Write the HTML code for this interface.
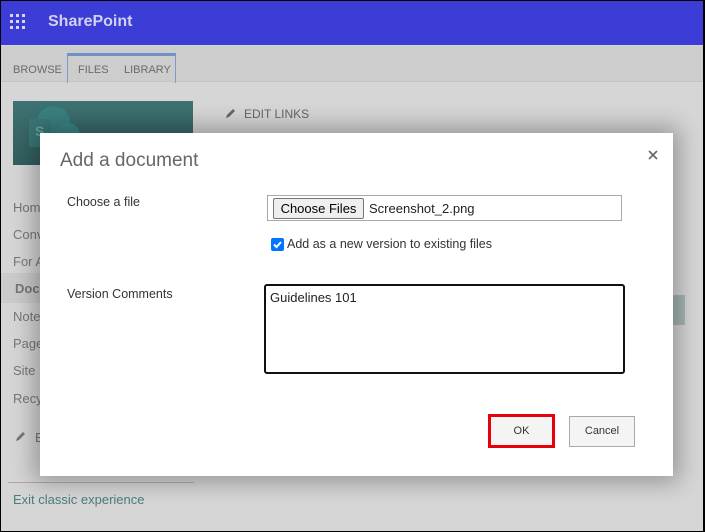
<!DOCTYPE html>
<html><head><style>
*{box-sizing:border-box;margin:0;padding:0}
body{width:705px;height:532px;overflow:hidden;background:#000;font-family:"Liberation Sans",sans-serif;position:relative}
.page{position:absolute;left:1px;top:1px;width:702px;height:530px;background:#d6d6d6;overflow:hidden}
.hdr{position:absolute;left:0;top:0;width:702px;height:44px;background:#3c3cd6}
.hdr .t{position:absolute;left:47px;top:12px;color:#d0d0f2;font-weight:bold;font-size:16px}
.dots{position:absolute;left:9px;top:13px}
.dots i{position:absolute;width:3px;height:3px;background:#d8d8f4}
.rib{position:absolute;left:0;top:44px;width:702px;height:37px;background:#cdcdcd;border-top:1px solid #d4d4d4;border-bottom:1px solid #c4c4c4}
.rib span{position:absolute;top:18px;font-size:11px;color:#6a6a6a}
.tab{position:absolute;left:66px;top:7px;width:109px;height:30px;border:1px solid #7d9ccb;border-top:3px solid #6e92c8;border-bottom:none}
.nav{position:absolute;left:12px;font-size:13px;color:#777}
.t2{position:absolute;font-size:12px;color:#666}
.dlg{position:absolute;left:39px;top:132px;width:633px;height:343px;background:#fff;box-shadow:0 0 22px 6px rgba(0,0,0,.3)}
.lbl{position:absolute;font-size:12.5px;color:#333}
</style></head><body>
<div class="page">
<div class="hdr">
<div class="dots">
<i style="left:0;top:0"></i><i style="left:6px;top:0"></i><i style="left:12px;top:0"></i>
<i style="left:0;top:6px"></i><i style="left:6px;top:6px"></i><i style="left:12px;top:6px"></i>
<i style="left:0;top:12px"></i><i style="left:6px;top:12px"></i><i style="left:12px;top:12px"></i>
</div>
<div class="t">SharePoint</div>
</div>
<div class="rib">
<div class="tab"></div>
<span style="left:12px">BROWSE</span><span style="left:77px">FILES</span><span style="left:123px">LIBRARY</span>
</div>
<div style="position:absolute;left:12px;top:100px;width:180px;height:64px;background:linear-gradient(#3e7373,#335e5e)">
<div style="position:absolute;left:24px;top:5px;width:33px;height:33px;border-radius:50%;background:#3a8080"></div>
<div style="position:absolute;left:43px;top:22px;width:24px;height:24px;border-radius:50%;background:#3a8585"></div>
<div style="position:absolute;left:16px;top:18px;width:22px;height:28px;background:#3b7878;color:#6ea5a5;font-weight:bold;font-size:14px;padding:4px 6px">S</div>
</div>
<svg style="position:absolute;left:224px;top:106px" width="12" height="12" viewBox="0 0 12 12"><path d="M1 11l1-3 6-6 2 2-6 6z" fill="#666"/></svg>
<div class="t2" style="left:243px;top:106px">EDIT LINKS</div>
<div style="position:absolute;left:0;top:272px;width:192px;height:30px;background:#cbcbcb"></div>
<div class="nav" style="top:199px">Home</div>
<div class="nav" style="top:226px">Conv</div>
<div class="nav" style="top:253px">For A</div>
<div class="nav" style="top:280px;left:14px;font-weight:bold;color:#777">Docu</div>
<div class="nav" style="top:308px">Note</div>
<div class="nav" style="top:335px">Page</div>
<div class="nav" style="top:362px">Site</div>
<div class="nav" style="top:390px">Recy</div>
<svg style="position:absolute;left:14px;top:429px" width="12" height="12" viewBox="0 0 12 12"><path d="M1 11l1-3 6-6 2 2-6 6z" fill="#777"/></svg>
<div class="nav" style="top:429px;left:34px">E</div>
<div style="position:absolute;left:7px;top:481px;width:186px;height:1px;background:#aaa"></div>
<div class="nav" style="top:491px;color:#4a7d7d">Exit classic experience</div>
<div style="position:absolute;left:671px;top:294px;width:13px;height:30px;background:#a6b5b5"></div>
<div class="dlg">
<div style="position:absolute;left:20px;top:17px;font-size:19px;color:#666">Add a document</div>
<svg style="position:absolute;left:608px;top:17px" width="10" height="10" viewBox="0 0 10 10"><path d="M1 1l8 8M9 1l-8 8" stroke="#666" stroke-width="1.6"/></svg>
<div class="lbl" style="left:27px;top:62px">Choose a file</div>
<div class="lbl" style="left:27px;top:154px">Version Comments</div>
<div style="position:absolute;left:227px;top:62px;width:355px;height:26px;border:1px solid #aaa"></div>
<div style="position:absolute;left:233px;top:65px;width:91px;height:21px;background:#efefef;border:1px solid #767676;border-radius:2px;font-size:13px;color:#000;text-align:center;line-height:19px">Choose Files</div>
<div style="position:absolute;left:329px;top:68px;font-size:13px;color:#222">Screenshot_2.png</div>
<div style="position:absolute;left:231px;top:105px;width:13px;height:13px;background:#0075ff;border-radius:2px">
<svg width="13" height="13" viewBox="0 0 13 13"><path d="M3 6.5l2.5 2.5 4.5-5" stroke="#fff" stroke-width="2" fill="none"/></svg></div>
<div class="lbl" style="left:247px;top:104px">Add as a new version to existing files</div>
<div style="position:absolute;left:224px;top:151px;width:361px;height:90px;border:2px solid #111;border-radius:3px">
<div style="position:absolute;left:4px;top:4px;font-size:13px;color:#222">Guidelines 101</div></div>
<div style="position:absolute;left:448px;top:281px;width:67px;height:34px;border:3px solid #e8000b;background:#f4f4f4;font-size:11px;color:#333;text-align:center;line-height:28px">OK</div>
<div style="position:absolute;left:529px;top:283px;width:66px;height:31px;border:1px solid #aaa;background:#f4f4f4;font-size:11px;color:#333;text-align:center;line-height:29px">Cancel</div>
</div>
</div>
</body></html>
